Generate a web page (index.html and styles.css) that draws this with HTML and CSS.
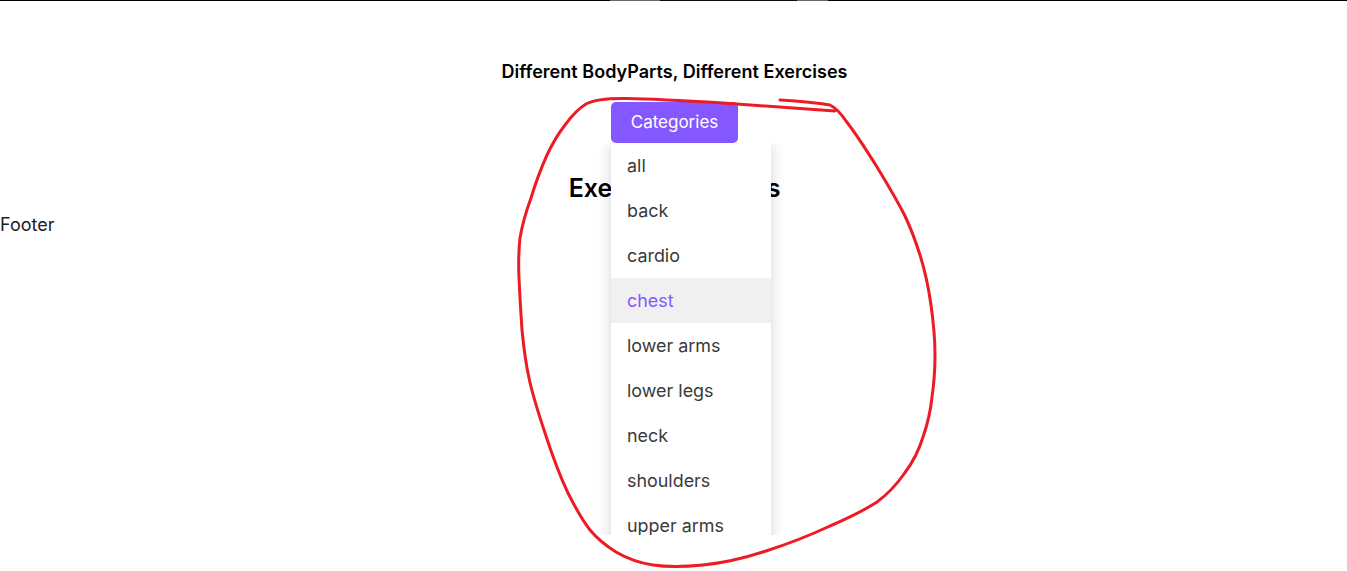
FILE: index.html
```html
<!DOCTYPE html>
<html lang="en">
<head>
<meta charset="utf-8">
<title>Exercises</title>
<link rel="stylesheet" href="styles.css">
</head>
<body>
<div class="topline"></div>
<main class="section">
  <h2 class="tagline">Different BodyParts, Different Exercises</h2>
  <div class="menu-wrap">
    <button class="menu-button" type="button">Categories</button>
    <div class="menu-clip">
      <ul class="menu-list">
        <li class="menu-item">all</li>
        <li class="menu-item">back</li>
        <li class="menu-item">cardio</li>
        <li class="menu-item menu-item-active">chest</li>
        <li class="menu-item">lower arms</li>
        <li class="menu-item">lower legs</li>
        <li class="menu-item">neck</li>
        <li class="menu-item">shoulders</li>
        <li class="menu-item">upper arms</li>
      </ul>
    </div>
  </div>
  <h2 class="results">Exercises Results</h2>
</main>
<footer class="footer">Footer</footer>
<svg class="scribble" width="1347" height="571" viewBox="0 0 1347 571" aria-hidden="true">
  <path d="M835 111 Q780 107 723 103 Q657 99 627 98.5 Q597 98 586 104 Q576 110 565 125 Q555 138 547 155 Q538 175 531 198 Q523 220 520 238 Q518 257 519 278 Q520 300 522 330 Q525 360 529 378 Q533 397 545 433 Q557 470 568 493 Q580 517 590 530 Q600 542 616 552 Q633 562 653 565 Q673 568 703 565 Q733 562 766 551 Q800 540 830 526 Q860 513 877 502 Q892 491 904 474 Q917 457 923 437 Q930 417 932 397 Q935 377 935 355 Q935 333 931 305 Q927 277 920 255 Q913 233 905 216 Q897 200 877 167 Q857 135 846 121 Q838 109 830 105 Q812 102 780 100"/>
</svg>
</body>
</html>
```
FILE: styles.css
```css
* {
  box-sizing: border-box;
}

html,
body {
  margin: 0;
  height: 571px;
  overflow: hidden;
}

body {
  background: #fff;
  color: #1a202c;
  font-family: Inter, "Liberation Sans", sans-serif;
  font-size: 18px;
  line-height: 27px;
}

.topline {
  height: 1px;
  background: linear-gradient(to right, #000 610px, #6b6660 610px, #6b6660 660px, #0a0a14 660px, #0a0a14 797px, #6b6660 797px, #6b6660 828px, #000 828px);
}

.section {
  display: flex;
  flex-direction: column;
  align-items: center;
  padding: 57px 0 0 2px;
}

.tagline {
  margin: 0;
  color: #000;
  font-size: 18px;
  font-weight: 600;
  line-height: 27px;
  letter-spacing: 0.03px;
}

.menu-wrap {
  position: relative;
  align-self: flex-start;
  margin: 17px 0 0 609px;
  height: 41px;
}

.menu-button {
  display: block;
  width: 127px;
  height: 41px;
  padding: 0;
  border: 0;
  border-radius: 5px;
  background: #8558ff;
  color: #fff;
  font: 400 17px/27px Inter, "Liberation Sans", sans-serif;
}

.menu-clip {
  position: absolute;
  top: 41px;
  left: -24px;
  width: 208px;
  height: 392px;
  padding: 0 24px;
  overflow: hidden;
}

.menu-list {
  width: 160px;
  margin: 0;
  padding: 0;
  list-style: none;
  background: #fff;
  box-shadow: 0 2px 14px rgba(0, 0, 0, 0.17);
}

.menu-item {
  height: 45px;
  padding: 9px 16px;
  color: #3a3a3a;
  font-size: 17.92px;
  line-height: 27px;
}

.menu-item-active {
  background: #f0f0f0;
  color: #8558ff;
}

.results {
  margin: 27px 0 0;
  color: #000;
  font-size: 25px;
  font-weight: 600;
  line-height: 36px;
}

.footer {
  margin-top: 5px;
  line-height: 27px;
}

.scribble {
  position: absolute;
  top: 0;
  left: 0;
  pointer-events: none;
}

.scribble path {
  fill: none;
  stroke: #ed1c24;
  stroke-width: 3;
  stroke-linecap: round;
  stroke-linejoin: round;
}
```
